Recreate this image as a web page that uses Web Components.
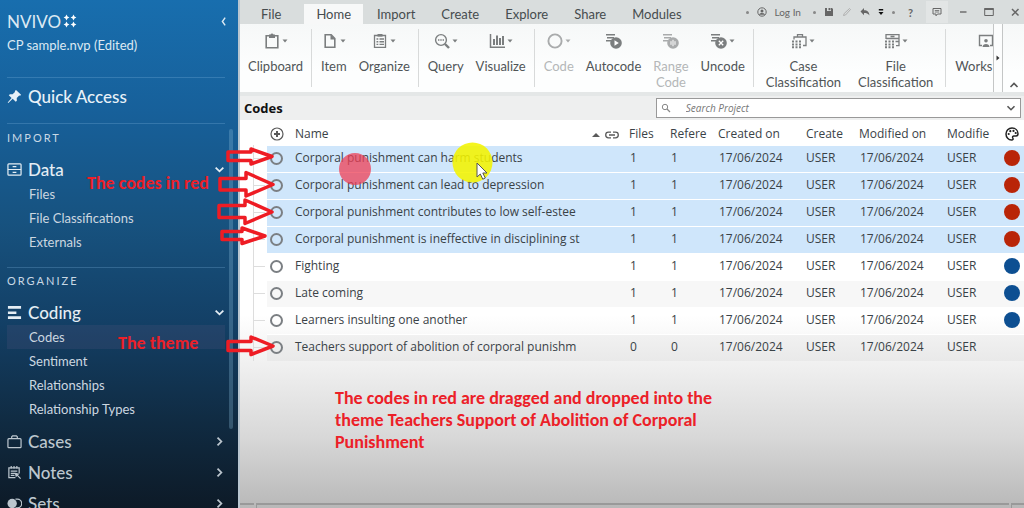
<!DOCTYPE html>
<html lang="en">
<head>
<meta charset="utf-8">
<meta name="viewport" content="width=device-width, initial-scale=1">
<title>NVivo - CP sample.nvp</title>
<style>
  html, body { margin: 0; height: 100%; }
  body { font-family: Lato, "Open Sans", sans-serif; overflow: hidden; }
</style>
</head>
<body>
<nv-app></nv-app>

<script>
const ICONS = {
  pin: ['0 0 16 16', '<path fill="currentColor" d="M9.6 1l5.400 5.200-1 .9-1-.1-2.600 2.700.1 2.700-1.200 1.200-3.200-3.100L1.400 15l-.7-.6 4.200-4.700-3-3L3.100 5.500l2.900.1 2.500-2.500-.1-1.100z"/>'],
  data: ['0 0 16 16', '<g fill="none" stroke="currentColor" stroke-width="1.3"><rect x="1" y="2" width="14" height="12" rx="1"/><path d="M1 8h14M6 5h4M6 11h4"/></g>'],
  coding: ['0 0 16 16', '<path fill="currentColor" d="M1 1h14v3H1zM1 7h9v2.500H1zM1 12h14v3H1z"/>'],
  cases: ['0 0 16 16', '<g fill="none" stroke="currentColor" stroke-width="1.3"><rect x="1" y="5" width="14" height="9.500" rx="1"/><path d="M5 5V3l1-1h4l1 1v2"/></g>'],
  notes: ['0 0 16 16', '<g fill="none" stroke="currentColor" stroke-width="1.3"><path d="M9 13.500H2V3h11v6M4.500 1v3M7.500 1v3M10.500 1v3M4 6.500h7M4 9h5M4 11h4M9 9l5.500 5.500M9 9l1 3.500M9 9l3.500 1"/></g>'],
  sets: ['0 0 16 16', '<circle cx="5.500" cy="8" r="5" fill="currentColor"/><path d="M9 3.300h2a4.700 4.700 0 0 1 0 9.400H9" fill="none" stroke="currentColor" stroke-width="1.300"/>'],
  down: ['0 0 10 10', '<path d="M1.500 3.200L5 6.700l3.500-3.500" fill="none" stroke="currentColor" stroke-width="1.600"/>'],
  up: ['0 0 10 10', '<path d="M1.500 7L5 3.500 8.500 7" fill="none" stroke="currentColor" stroke-width="1.600"/>'],
  right: ['0 0 10 10', '<path d="M3.200 1.500L6.700 5 3.200 8.500" fill="none" stroke="currentColor" stroke-width="1.600"/>'],
  left: ['0 0 10 10', '<path d="M6.500 1.500L4 5l2.500 3.500" fill="none" stroke="currentColor" stroke-width="1.300"/>'],
  caret: ['0 0 6 6', '<path d="M.5 1.500h5L3 4.500z" fill="currentColor"/>'],
  play: ['0 0 6 6', '<path d="M1.500 .5v5L4.500 3z" fill="currentColor"/>'],
  sort: ['0 0 8 8', '<path d="M0 6h8L4 2z" fill="currentColor"/>'],
  clipboard: ['0 0 16 16', '<path d="M5 2.700H2.200v12h11.600v-12H11" fill="none" stroke="currentColor" stroke-width="1.600"/><path d="M5 1.500h1.500a1.600 1.600 0 0 1 3 0H11V5H5z" fill="currentColor"/>'],
  item: ['0 0 16 16', '<path d="M3.200 1.800h6l3.600 3.700v8.700H3.200z" fill="none" stroke="currentColor" stroke-width="1.600"/><path d="M8.500 1.500v5h4.700z" fill="currentColor"/>'],
  organize: ['0 0 16 16', '<path d="M2.500 2.500h11v11.800h-11z" fill="none" stroke="currentColor" stroke-width="1.300"/><path d="M5.500 1h5v2.600h-5z" fill="currentColor"/><path d="M4.500 6h1.800M7.500 6h4.500M4.500 8.700h1.800M7.500 8.700h4.500M4.500 11.400h1.800M7.500 11.400h4.500" stroke="currentColor" stroke-width="1.400"/>'],
  query: ['0 0 16 16', '<circle cx="7" cy="7" r="5.400" fill="none" stroke="currentColor" stroke-width="1.400"/><path d="M4 7h1.400M6.300 7h1.400M8.600 7H10" stroke="currentColor" stroke-width="1.300"/><path d="M11 11l4 4" stroke="currentColor" stroke-width="2.400"/>'],
  chart: ['0 0 16 16', '<path d="M1.500 1v13.300H16" fill="none" stroke="currentColor" stroke-width="1.500"/><path d="M5 12V6M8 12V2.500M11 12V5M14 12V3" stroke="currentColor" stroke-width="2"/>'],
  ring: ['0 0 16 16', '<circle cx="8" cy="8" r="6.600" fill="none" stroke="currentColor" stroke-width="1.900"/>'],
  auto: ['0 0 16 16', '<path d="M0 1.700h9M1 4.700h7M0 7.700h5" stroke="currentColor" stroke-width="1.500"/><circle cx="10" cy="10" r="5.800" fill="currentColor"/><path d="M8.500 7.300v5.400l4.300-2.700z" fill="#fff"/>'],
  range: ['0 0 16 16', '<path d="M0 1.700h9M1 4.700h7M0 7.700h5" stroke="currentColor" stroke-width="1.500"/><circle cx="10" cy="10" r="5.800" fill="currentColor"/><path d="M10 6.800v6.400M8 8.200v3.600M12 8.200v3.600" stroke="#fff" stroke-width="1"/>'],
  uncode: ['0 0 16 16', '<path d="M0 1.700h9M1 4.700h7M0 7.700h5" stroke="currentColor" stroke-width="1.500"/><circle cx="10" cy="10" r="5.800" fill="currentColor"/><path d="M7.800 7.800l4.400 4.400M12.200 7.800l-4.400 4.400" stroke="#fff" stroke-width="1.300"/>'],
  casecls: ['0 0 16 16', '<path d="M3 6.500V4h12v8.500h-3M6.500 4V1.700h5V4" fill="none" stroke="currentColor" stroke-width="1.300"/><path d="M1 7.500h2v2H1zM4.500 7.500h2v2h-2zM8 7.500h2v2H8zM1 10.500h2v2H1zM4.500 10.500h2v2h-2zM8 10.500h2v2H8zM1 13.300h2v2H1zM4.500 13.300h2v2h-2zM8 13.300h2v2H8z" fill="currentColor"/>'],
  filecls: ['0 0 16 16', '<path d="M2 6V1.700h13v11h-3M2 5.500h13M6.500 3.500h4M11.500 8.500h3" fill="none" stroke="currentColor" stroke-width="1.300"/><path d="M1 7.500h2v2H1zM4.500 7.500h2v2h-2zM8 7.500h2v2H8zM1 10.500h2v2H1zM4.500 10.500h2v2h-2zM8 10.500h2v2H8zM1 13.300h2v2H1zM4.500 13.300h2v2h-2zM8 13.300h2v2H8z" fill="currentColor"/>'],
  work: ['0 0 16 16', '<path d="M4 12.500H1.500V2.500h13v10H12" fill="none" stroke="currentColor" stroke-width="1.400"/><circle cx="8" cy="7.700" r="1.800" fill="currentColor"/><path d="M4.500 14c0-4 7-4 7 0z" fill="currentColor"/>'],
  user: ['0 0 10 10', '<circle cx="5" cy="5" r="4.200" fill="none" stroke="currentColor"/><circle cx="5" cy="4" r="1.500" fill="currentColor"/><path d="M2 7.800c.5-2.500 5.500-2.500 6 0z" fill="currentColor"/>'],
  save: ['0 0 10 10', '<path d="M1 1h2v3h4V1h1l1 1v7H1z" fill="currentColor"/><path d="M4.500 1h2v2.200h-2z" fill="currentColor"/>'],
  pencil: ['0 0 10 10', '<path d="M1.500 8.500l.7-2L7.500 1.500l1 1L3.500 8z" fill="none" stroke="currentColor" stroke-width=".9"/>'],
  undo: ['0 0 10 10', '<path d="M4 1v2.200c3.500 0 5 1.500 5.500 5.300C8 6.500 6.500 6 4 6v2.200L.5 4.600z" fill="currentColor"/>'],
  drop: ['0 0 6 8', '<path d="M.8 1h4.400v1.500H.8zM.5 4h5L3 7z" fill="currentColor"/>'],
  comment: ['0 0 10 10', '<path d="M1 1.500h8v5.500H5.500L4 8.800V7H1z" fill="none" stroke="currentColor"/><path d="M2.800 3.500h4.400M2.800 5h4.400" stroke="currentColor" stroke-width=".8"/>'],
  min: ['0 0 10 10', '<path d="M2 5h6.500" stroke="currentColor" stroke-width="1.400"/>'],
  max: ['0 0 10 10', '<path d="M.7 1.500h8.600v7H.7z" fill="none" stroke="currentColor"/><path d="M.5 1h9v2h-9z" fill="currentColor"/>'],
  close: ['0 0 10 10', '<path d="M2 2l6.500 6.500M8.500 2L2 8.500" stroke="currentColor" stroke-width="1.500"/>'],
  search: ['0 0 10 10', '<circle cx="4" cy="4" r="2.700" fill="none" stroke="currentColor"/><path d="M6 6l3 3" stroke="currentColor" stroke-width="1.200"/>'],
  plus: ['0 0 14 14', '<circle cx="7" cy="7" r="6" fill="none" stroke="currentColor" stroke-width="1.200"/><path d="M7 4v6M4 7h6" stroke="currentColor" stroke-width="2"/>'],
  link: ['0 0 14 10', '<path d="M6 2.200H3.500a2.800 2.800 0 0 0 0 5.600H6M8 2.200h2.500a2.800 2.800 0 0 1 0 5.600H8M4 5h6" fill="none" stroke="currentColor" stroke-width="1.300"/>'],
  palette: ['0 0 14 14', '<path d="M7 1C3.500 1 1 3.700 1 7s2.500 6 5.500 6c1.600 0 1.900-.9 1.300-2-.6-1.300.2-2.200 1.500-2H11c1.500 0 2-1 2-2.200C13 3.500 10.500 1 7 1z" fill="none" stroke="currentColor" stroke-width="1.500"/><g fill="currentColor"><circle cx="3.700" cy="7" r="1.100"/><circle cx="5.300" cy="4.200" r="1.100"/><circle cx="8.500" cy="3.900" r="1.100"/><circle cx="10.700" cy="6" r="1.100"/></g>']
};

class NvIcon extends HTMLElement {
  constructor() { super(); this.attachShadow({ mode: 'open' }); }
  connectedCallback() {
    const [box, body] = ICONS[this.getAttribute('name')];
    this.shadowRoot.innerHTML = `<style>
      :host { display: inline-block; flex: none; width: 16px; height: 16px; }
      svg { display: block; width: 100%; height: 100%; }
    </style><svg viewBox="${box}" aria-hidden="true">${body}</svg>`;
  }
}

/* Base for elements whose shadow root is a fixed piece of markup */
function define(name, html) {
  const t = document.createElement('template');
  t.innerHTML = html;
  customElements.define(name, class extends HTMLElement {
    constructor() {
      super();
      this.attachShadow({ mode: 'open' }).append(t.content.cloneNode(true));
    }
  });
}

customElements.define('nv-icon', NvIcon);

/* ---------- Sidebar ---------- */
class NvGroup extends HTMLElement {
  constructor() { super(); this.attachShadow({ mode: 'open' }); }
  connectedCallback() {
    const open = this.hasAttribute('open');
    this.shadowRoot.innerHTML = `<style>
      :host { display: block; color: #e4edf4; }
      :host(:not([open])) { color: #bcc6ce; }
      button { all: unset; box-sizing: border-box; display: flex; align-items: center; gap: 6px; width: 100%;
        height: 26px; font-size: 17px; font-weight: 500; color: inherit; cursor: pointer; }
      .t { flex: 1; }
      .i { width: 15px; height: 15px; }
      .c { width: 11px; height: 11px; }
      .l { display: ${open ? 'block' : 'none'}; padding-bottom: 2px; }
    </style>
    <button aria-expanded="${open}"><nv-icon class="i" name="${this.getAttribute('icon')}"></nv-icon>
      <span class="t">${this.getAttribute('label')}</span>
      <nv-icon class="c" name="${open ? 'down' : 'right'}"></nv-icon></button>
    <div class="l"><slot></slot></div>`;
  }
}
customElements.define('nv-group', NvGroup);

class NvLink extends HTMLElement {
  constructor() { super(); this.attachShadow({ mode: 'open' }); }
  connectedCallback() {
    this.shadowRoot.innerHTML = `<style>
      :host { display: block; }
      a { display: block; line-height: 24px; padding-left: 22px; font-size: 13px; color: #ccd7e0; text-decoration: none; }
      :host([current]) a { background: rgba(70, 80, 120, .3); }
    </style><a href="#"><slot></slot></a>`;
  }
}
customElements.define('nv-link', NvLink);

define('nv-sidebar', `<style>
  :host { display: flex; flex-direction: column; height: 100vh; box-sizing: border-box; overflow: hidden;
    padding: 9px 0 0 7px; color: #dce9f3;
    background: linear-gradient(#186eae 0, #17609a 22%, #17527f 44%, #133f65 64%, #102b42 83%, #0d1a27 100%); }
  header { display: flex; align-items: center; justify-content: space-between; height: 24px; padding-right: 9px; }
  .logo { display: flex; align-items: center; gap: 2px; font-size: 17px; }
  .logo svg { width: 14px; height: 14px; }
  button { all: unset; display: flex; cursor: pointer; }
  header nv-icon { width: 11px; height: 11px; }
  .file { font-size: 13px; line-height: 24px; }
  hr { border: 0; height: 1px; margin: 0 13px 0 0; background: rgba(140, 190, 230, .25); }
  .file + hr { margin-top: 20px; }
  .quick { display: flex; align-items: center; gap: 6px; height: 37px; padding-bottom: 8px; font-size: 17px; font-weight: 500; color: #e8f1f8; text-decoration: none; }
  .quick nv-icon { width: 15px; height: 15px; }
  .body { display: flex; flex: 1; min-height: 0; gap: 4px; }
  nav { flex: 1; min-width: 0; }
  .bar { width: 4px; height: 78%; margin: 5px 5px 0 0; border-radius: 2px; background: rgba(140, 190, 220, .3); }
  h2 { margin: 4px 0 8px; font-size: 11px; line-height: 20px; font-weight: 400; letter-spacing: 2px; color: #c8d8e5; }
  .groups { display: flex; flex-direction: column; gap: 5px; }
  nav hr { margin: 11px 0 0; }
  nav hr + h2 { margin-top: 3px; }
</style>
<header>
  <span class="logo">NVIVO<svg viewBox="0 0 14 14" fill="#fff" aria-hidden="true"><path id="s" d="M3.500 .6l1 1.900 1.900 1-1.900 1-1 1.900-1-1.900-1.900-1 1.900-1z"/><use href="#s" x="7"/><use href="#s" y="7"/><use href="#s" x="7" y="7"/></svg></span>
  <button aria-label="Collapse navigation"><nv-icon name="left"></nv-icon></button>
</header>
<div class="file">CP sample.nvp (Edited)</div>
<hr>
<a class="quick" href="#"><nv-icon name="pin"></nv-icon>Quick Access</a>
<hr>
<div class="body">
  <nav>
    <h2>IMPORT</h2>
    <div class="groups">
      <nv-group icon="data" label="Data" open><nv-link>Files</nv-link><nv-link>File Classifications</nv-link><nv-link>Externals</nv-link></nv-group>
    </div>
    <hr>
    <h2>ORGANIZE</h2>
    <div class="groups">
      <nv-group icon="coding" label="Coding" open><nv-link current>Codes</nv-link><nv-link>Sentiment</nv-link><nv-link>Relationships</nv-link><nv-link>Relationship Types</nv-link></nv-group>
      <nv-group icon="cases" label="Cases"></nv-group>
      <nv-group icon="notes" label="Notes"></nv-group>
      <nv-group icon="sets" label="Sets"></nv-group>
    </div>
  </nav>
  <div class="bar"></div>
</div>`);

/* ---------- Title bar ---------- */
define('nv-titlebar', `<style>
  :host { display: flex; align-items: flex-end; justify-content: space-between; height: 24px; background: #d9dddd; color: #444; }
  .tabs { display: flex; gap: 2px; }
  .tabs button { all: unset; box-sizing: border-box; height: 20px; line-height: 21px; padding: 0 12px; font-size: 13px; color: #464c4e; cursor: pointer; }
  .tabs .file { padding: 0 21px; }
  .tabs .on { background: #f7f8f8; }
  .tools { display: flex; align-items: center; height: 24px; gap: 8px; padding-right: 4px; color: #666; }
  .tools button { all: unset; display: flex; align-items: center; gap: 7px; font-size: 10px; cursor: pointer; }
  .tools nv-icon { width: 10px; height: 10px; }
  .tools .drop nv-icon { width: 6px; height: 8px; color: #111; }
  .tools i { width: 3px; height: 3px; border-radius: 2px; background: #888; }
  .tools .login { margin-right: 4px; }
  .tools .pen { color: #aaa; }
  .tools .help { font-size: 11px; font-weight: 700; padding: 0 5px; }
  .tools .note { padding: 6px 6px; background: #e2e5e5; }
  .win { display: flex; gap: 16px; margin-left: 2px; }
</style>
<div class="tabs" role="tablist">
  <button class="file" role="tab">File</button><button class="on" role="tab" aria-selected="true">Home</button><button role="tab">Import</button><button role="tab">Create</button><button role="tab">Explore</button><button role="tab">Share</button><button role="tab">Modules</button>
</div>
<div class="tools">
  <i></i>
  <button class="login"><nv-icon name="user"></nv-icon>Log In</button>
  <i></i>
  <button aria-label="Save"><nv-icon name="save"></nv-icon></button>
  <button class="pen" aria-label="Edit"><nv-icon name="pencil"></nv-icon></button>
  <button aria-label="Undo"><nv-icon name="undo"></nv-icon></button>
  <button class="drop" aria-label="More"><nv-icon name="drop"></nv-icon></button>
  <i></i>
  <button class="help">?</button>
  <button class="note" aria-label="Feedback"><nv-icon name="comment"></nv-icon></button>
  <span class="win">
    <button aria-label="Minimize"><nv-icon name="min"></nv-icon></button>
    <button aria-label="Maximize"><nv-icon name="max"></nv-icon></button>
    <button aria-label="Close"><nv-icon name="close"></nv-icon></button>
  </span>
</div>`);

/* ---------- Ribbon ---------- */
class NvTool extends HTMLElement {
  constructor() { super(); this.attachShadow({ mode: 'open' }); }
  connectedCallback() {
    const menu = this.hasAttribute('menu');
    this.shadowRoot.innerHTML = `<style>
      :host { display: block; flex: none; color: #505557; }
      :host([off]) { color: #b4b7b8; }
      button { all: unset; display: flex; flex-direction: column; align-items: center; gap: 9px; cursor: pointer; }
      .i { display: flex; align-items: center; gap: 2px; color: #7b7e7f; }
      :host([off]) .i { color: #a9abac; }
      .i nv-icon + nv-icon { width: 6px; height: 6px; }
      span.l { font-size: 13px; line-height: 16px; text-align: center; white-space: pre-line; }
      :host([start]) button { min-width: 62px; }
      :host([start]) .l { align-self: flex-start; }
    </style><button ${this.hasAttribute('off') ? 'disabled' : ''}><span class="i"><nv-icon name="${this.getAttribute('icon')}"></nv-icon>${menu ? '<nv-icon name="caret"></nv-icon>' : ''}</span><span class="l"><slot></slot></span></button>`;
  }
}
customElements.define('nv-tool', NvTool);

define('nv-ribbon', `<style>
  :host { display: flex; height: 68px; border-bottom: 4px solid #e4e7e7; background: linear-gradient(#f6f8f8, #fdfefe 70%); }
  .groups { display: flex; flex: 1; min-width: 0; overflow: hidden; }
  .g { display: flex; flex: none; gap: 12px; padding: 9px 8px 0 10px; }
  .g + .g { background: linear-gradient(#d8dada, #d8dada) 0 5px / 1px 58px no-repeat; }
  .g:first-child { padding: 9px 8px 0; }
  .g.wide { gap: 17px; padding: 9px 12px 0 13px; }
  .more { all: unset; box-sizing: border-box; width: 10px; display: flex; align-items: center; justify-content: center; border: 1px solid #c4c6c6; border-width: 0 1px; background: #fcfdfd; color: #333; }
  .more nv-icon { width: 6px; height: 6px; }
  .fold { all: unset; display: flex; align-items: flex-end; padding: 0 5px 2px 6px; color: #555; }
  .fold nv-icon { width: 10px; height: 10px; }
</style>
<div class="groups">
  <div class="g"><nv-tool icon="clipboard" menu>Clipboard</nv-tool></div>
  <div class="g"><nv-tool icon="item" menu>Item</nv-tool><nv-tool icon="organize" menu>Organize</nv-tool></div>
  <div class="g"><nv-tool icon="query" menu>Query</nv-tool><nv-tool icon="chart" menu>Visualize</nv-tool></div>
  <div class="g"><nv-tool icon="ring" menu off>Code</nv-tool><nv-tool icon="auto">Autocode</nv-tool><nv-tool icon="range" off>Range
Code</nv-tool><nv-tool icon="uncode" menu>Uncode</nv-tool></div>
  <div class="g wide"><nv-tool icon="casecls" menu>Case
Classification</nv-tool><nv-tool icon="filecls" menu>File
Classification</nv-tool></div>
  <div class="g"><nv-tool icon="work" start>Works</nv-tool></div>
</div>
<button class="more" aria-label="Scroll ribbon"><nv-icon name="play"></nv-icon></button>
<button class="fold" aria-label="Collapse ribbon"><nv-icon name="up"></nv-icon></button>`);

/* ---------- List header with the search box ---------- */
define('nv-listhead', `<style>
  :host { display: flex; align-items: center; justify-content: space-between; height: 24px; padding: 0 3px 0 4px; background: #eeefef; }
  h1 { margin: 0; font: 700 13px/22px "Open Sans", sans-serif; color: #111; }
  .box { display: flex; align-items: center; gap: 8px; flex: 0 0 47%; height: 20px; box-sizing: border-box; border: 1px solid #999; background: #fff; padding: 0 4px; color: #888; }
  .box nv-icon { width: 10px; height: 10px; }
  input { all: unset; flex: 1; min-width: 0; padding-left: 7px; font: italic 10px "Open Sans", sans-serif; color: #555; }
  input::placeholder { color: #777; opacity: 1; }
  button { all: unset; display: flex; color: #555; }
</style>
<h1>Codes</h1>
<div class="box"><nv-icon name="search"></nv-icon><input type="text" aria-label="Search Project" placeholder="Search Project"><button aria-label="Search options"><nv-icon name="down"></nv-icon></button></div>`);

/* ---------- Code table ---------- */
const ROWS = [
  ['Corporal punishment can harm students', 1, 'red'],
  ['Corporal punishment can lead to depression', 1, 'red'],
  ['Corporal punishment contributes to low self-estee', 1, 'red'],
  ['Corporal punishment is ineffective in disciplining st', 1, 'red'],
  ['Fighting', 1, 'blue'],
  ['Late coming', 1, 'blue'],
  ['Learners insulting one another', 1, 'blue'],
  ['Teachers support of abolition of corporal punishm', 0, '']
];
class NvTable extends HTMLElement {
  constructor() { super(); this.attachShadow({ mode: 'open' }); }
  connectedCallback() {
    const day = '17/06/2024';
    const rows = ROWS.map(([name, n, c]) => `<tr class="${c === 'red' ? 'sel' : ''}"><td class="tree"></td><td class="o"><i></i></td><td>${name}</td><td></td><td class="v">${n}</td><td class="v">${n}</td><td class="v">${day}</td><td>USER</td><td class="v">${day}</td><td>USER</td><td class="dot">${c ? `<b class="${c}"></b>` : ''}</td></tr>`).join('');
    this.shadowRoot.innerHTML = `<style>
      :host { display: block; font-family: "Open Sans", sans-serif; font-size: 12px; color: #3a4247; }
      table { width: 100%; table-layout: fixed; border-collapse: collapse; }
      th { height: 25px; padding: 2px 0 0 8px; box-sizing: border-box; font-weight: 400; text-align: left; white-space: nowrap; overflow: hidden; }
      td { height: 26px; padding: 0 0 0 8px; line-height: 24px; white-space: nowrap; overflow: hidden; border-top: 1px solid #fff; vertical-align: top; }
      td.v { padding-left: 9px; }
      tr:nth-child(even) td { background: rgba(0, 0, 0, .03); }
      tr.sel td { background: #cfe6fb; }
      tbody tr td.tree { padding: 0; background: linear-gradient(#ddd, #ddd) 13px 0 / 1px 100% no-repeat, linear-gradient(#ddd, #ddd) 13px 50% / 12px 1px no-repeat; border: 0; }
      th.o, td.o { padding: 0; }
      th.o nv-icon { width: 14px; height: 14px; margin-left: 3px; }
      th nv-icon { vertical-align: middle; color: #5a5a5a; }
      .o i { display: block; box-sizing: border-box; width: 13px; height: 13px; margin: 6px 0 0 3px; border: 2px solid #7b7f83; border-radius: 50%; }
      .s nv-icon { width: 8px; height: 8px; margin-right: 5px; }
      .s nv-icon + nv-icon { width: 14px; height: 10px; margin: 0; }
      th.dot, td.dot { padding: 0; }
      th.dot nv-icon { width: 14px; height: 14px; margin-left: 5px; color: #222; }
      .dot b { display: block; width: 16px; height: 16px; margin: 4px 0 0 4px; border-radius: 50%; }
      .red { background: #b92508; } .blue { background: #0d4f92; }
    </style>
    <table>
      <colgroup><col style="width:27px"><col style="width:20px"><col><col style="width:37px"><col style="width:41px"><col style="width:48px"><col style="width:88px"><col style="width:53px"><col style="width:88px"><col style="width:61px"><col style="width:24px"></colgroup>
      <thead><tr><th></th><th class="o"><nv-icon name="plus"></nv-icon></th><th>Name</th><th class="s"><nv-icon name="sort"></nv-icon><nv-icon name="link"></nv-icon></th><th>Files</th><th>Refere</th><th>Created on</th><th>Create</th><th>Modified on</th><th>Modifie</th><th class="dot"><nv-icon name="palette"></nv-icon></th></tr></thead>
      <tbody>${rows}</tbody>
    </table>`;
  }
}
customElements.define('nv-table', NvTable);

/* ---------- Teaching notes drawn over the window ---------- */
define('nv-notes', `<style>
  :host { position: absolute; inset: 0; pointer-events: none; color: #ec2028; font-family: Carlito, Lato, sans-serif; font-size: 18px; font-weight: 700; line-height: 22px; }
  svg { position: absolute; left: 0; top: 0; width: 520px; height: 400px; }
  p { position: absolute; margin: 0; white-space: pre; }
</style>
<svg viewBox="0 0 520 400" aria-hidden="true">
  <circle cx="355" cy="169" r="16" fill="#ee3f55" fill-opacity=".75"/>
  <circle cx="472.500" cy="162.500" r="20" fill="#f4f400" fill-opacity=".88"/>
  <path d="M477 163v14l3.300-3 2.500 5.200 2.500-1.200-2.500-5h4.200z" fill="#fff" stroke="#555"/>
  <g fill="none" stroke="#ee1c24" stroke-width="3.500" stroke-linejoin="round">
    <path d="M228 152h23v-3l21 7.500-21 7.500v-3.500h-23z"/>
    <path d="M220 178.500h26v-6l27 12-27 11.500v-6h-26z"/>
    <path d="M219 205.500h26v-5.500l27 12-27 11.500v-6h-26z"/>
    <path d="M222 231.500h20v-3.500l23 8-23 7.500v-4h-20z"/>
    <path d="M228 341.500h23v-4.500l22 9-22 8.500v-4h-23z"/>
  </g>
</svg>
<p style="left:87px;top:172px">The codes in red</p>
<p style="left:118px;top:332px">The theme</p>
<p style="left:335px;top:387px">The codes in red are dragged and dropped into the
theme Teachers Support of Abolition of Corporal
Punishment</p>`);

/* ---------- Window ---------- */
define('nv-app', `<style>
  :host { display: grid; grid-template-columns: 238px minmax(0, 1fr); position: relative; height: 100vh; overflow: hidden; }
  main { display: flex; flex-direction: column; min-width: 0; border-left: 2px solid #b9c6d0;
    background: linear-gradient(#fff 0, #fff 62%, #eee 73%, #d8d8d8 86%, #b8b8b8 100%); }
  nv-table { flex: 1; }
  footer { display: grid; grid-template-columns: 14px 1fr 13px; column-gap: 2px; height: 5px; }
  footer i { border-top: 2px solid #999; }
  footer i + i { border-left: 1px solid #999; }
</style>
<nv-sidebar></nv-sidebar>
<main>
  <nv-titlebar></nv-titlebar>
  <nv-ribbon></nv-ribbon>
  <nv-listhead></nv-listhead>
  <nv-table></nv-table>
  <footer><i></i><i></i><i></i></footer>
</main>
<nv-notes></nv-notes>`);
</script>
</body>
</html>
